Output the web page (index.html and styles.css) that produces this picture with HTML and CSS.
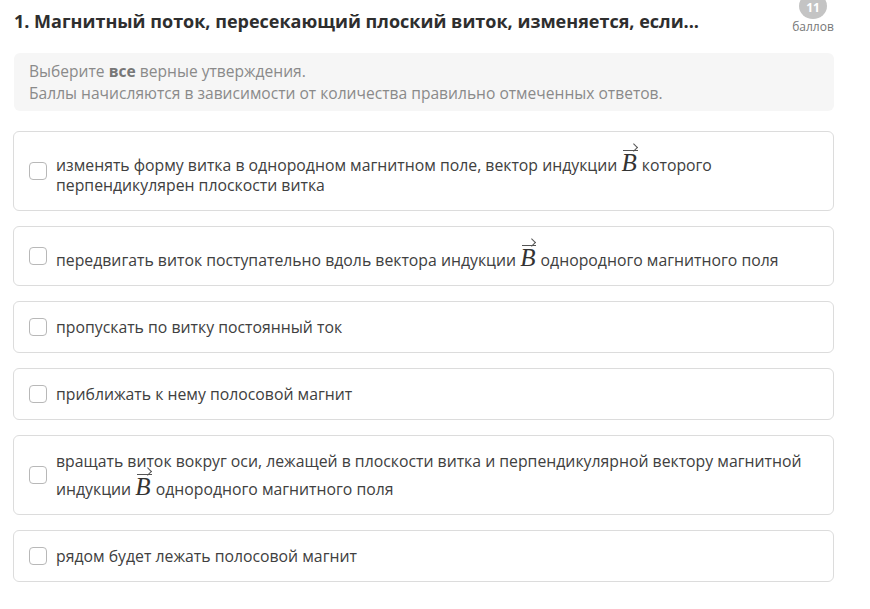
FILE: index.html
```html
<!DOCTYPE html>
<html lang="ru">
<head>
    <meta charset="UTF-8">
    <title>Вопрос 1</title>
    <link rel="stylesheet" href="styles.css">
</head>
<body>
    <div class="question">
        <div class="question-head">
            <h1 class="question-title">1. Магнитный поток, пересекающий плоский виток, изменяется, если...</h1>
            <div class="score">
                <span class="score-num">11</span>
                <span class="score-label">баллов</span>
            </div>
        </div>

        <div class="hint">
            <p>Выберите <b>все</b> верные утверждения.</p>
            <p>Баллы начисляются в зависимости от количества правильно отмеченных ответов.</p>
        </div>

        <div class="answers">
            <label class="answer">
                <span class="check"></span>
                <span class="answer-text">изменять форму витка в однородном магнитном поле, вектор индукции <span class="vec">B</span> которого перпендикулярен плоскости витка</span>
            </label>
            <label class="answer">
                <span class="check"></span>
                <span class="answer-text">передвигать виток поступательно вдоль вектора индукции <span class="vec">B</span> однородного магнитного поля</span>
            </label>
            <label class="answer">
                <span class="check"></span>
                <span class="answer-text">пропускать по витку постоянный ток</span>
            </label>
            <label class="answer">
                <span class="check"></span>
                <span class="answer-text">приближать к нему полосовой магнит</span>
            </label>
            <label class="answer">
                <span class="check"></span>
                <span class="answer-text">вращать виток вокруг оси, лежащей в плоскости витка и перпендикулярной вектору магнитной индукции <span class="vec">B</span> однородного магнитного поля</span>
            </label>
            <label class="answer">
                <span class="check"></span>
                <span class="answer-text">рядом будет лежать полосовой магнит</span>
            </label>
        </div>
    </div>
</body>
</html>
```

FILE: styles.css
```css
body {
    margin: 0;
    background: #fff;
    font-family: 'Open Sans', 'Noto Sans', sans-serif;
    color: #333;
}
.question {
    width: 821px;
    padding-left: 13px;
}
.question-head {
    display: flex;
    justify-content: space-between;
    align-items: flex-start;
}
.question-title {
    margin: 9px 0 0 1px;
    font-size: 18px;
    line-height: 24px;
    font-weight: 700;
    color: #2e2e2e;
}
.score {
    display: flex;
    flex-direction: column;
    align-items: center;
    width: 46px;
    margin-top: -7px;
    margin-right: -2px;
}
.score-num {
    width: 28px;
    height: 26px;
    border-radius: 50%;
    background: #c4c4c4;
    color: #fff;
    font-size: 12px;
    font-weight: 700;
    line-height: 30px;
    text-align: center;
}
.score-label {
    margin-top: 1px;
    font-size: 12px;
    line-height: 14px;
    color: #777;
}
.hint {
    margin: 19px 0 0 1px;
    padding: 7px 15px;
    background: #f6f6f6;
    border-radius: 6px;
    font-size: 15.6px;
    line-height: 22px;
    color: #8a8a8a;
}
.hint p {
    margin: 0;
}
.hint b {
    color: #777;
}
.answers {
    display: flex;
    flex-direction: column;
    gap: 15px;
    margin-top: 20px;
}
.answer {
    display: flex;
    align-items: center;
    padding: 15px 15px;
    border: 1px solid #dcdcdc;
    border-radius: 6px;
    font-size: 15.8px;
    line-height: 20px;
    color: #404040;
}
.check {
    flex: none;
    width: 16px;
    height: 16px;
    margin-right: 9px;
    border: 1px solid #b8b8b8;
    border-radius: 4px;
    background: #fff;
}
.vec {
    position: relative;
    display: inline-block;
    padding: 5px 1px 0 0;
    font-family: 'Liberation Serif', serif;
    font-style: italic;
    font-size: 25px;
    line-height: 22px;
    color: #333;
}
.vec::before {
    content: "";
    position: absolute;
    top: 3px;
    left: 2px;
    right: 0;
    height: 1px;
    background: #555;
}
.vec::after {
    content: "";
    position: absolute;
    top: 0;
    right: 0;
    width: 5px;
    height: 5px;
    border-top: 1px solid #555;
    border-right: 1px solid #555;
    transform-origin: top right;
    transform: translate(0, 0.5px) rotate(45deg);
}
```
